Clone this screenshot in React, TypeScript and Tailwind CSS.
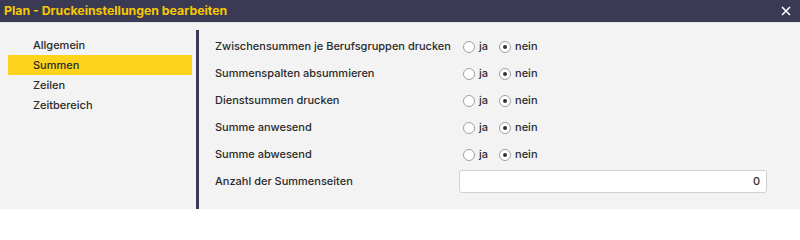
import React from "react";

const rows = [
  "Zwischensummen je Berufsgruppen drucken",
  "Summenspalten absummieren",
  "Dienstsummen drucken",
  "Summe anwesend",
  "Summe abwesend",
];

function Radio({ checked }: { checked?: boolean }) {
  return (
    <span className="w-[12px] h-[12px] rounded-full border border-[#a0a0a0] bg-white flex items-center justify-center">
      {checked && <span className="w-[4px] h-[4px] rounded-full bg-[#333]" />}
    </span>
  );
}

export default function App() {
  return (
    <div className="w-[800px] h-[209px] overflow-hidden bg-[#f3f3f3] flex flex-col text-[#2a2a2a] text-[11px] font-medium" style={{ fontFamily: 'Inter, sans-serif' }}>
      <div className="h-[22px] shrink-0 bg-[#3b3a55] flex items-center justify-between pl-[4px] pr-[4px] border-b border-[#e8e8ee] box-content">
        <span className="text-[#f6c800] font-bold text-[12.3px]">Plan - Druckeinstellungen bearbeiten</span>
        <svg width="12" height="12" viewBox="0 0 12 12" className="mr-[4px]">
          <path d="M2 2 L10 10 M10 2 L2 10" stroke="#fff" strokeWidth="1.6" />
        </svg>
      </div>
      <div className="flex flex-1 pt-[7px]">
        <div className="w-[196px] pl-[8px] pt-[5px] flex flex-col">
          {["Allgemein", "Summen", "Zeilen", "Zeitbereich"].map((t) => (
            <div key={t} className={`h-[20px] flex items-center pl-[25px] ${t === "Summen" ? "bg-[#fdd31c] w-[184px]" : ""}`}>
              {t}
            </div>
          ))}
        </div>
        <div className="w-[3px] bg-[#3b3a55]" />
        <div className="flex-1 pl-[16px] pt-[3px] flex flex-col">
          {rows.map((r) => (
            <div key={r} className="h-[27px] flex items-center whitespace-nowrap">
              <span className="w-[244px]">{r}</span>
              <span className="flex items-center ml-[4px]">
                <Radio />
                <span className="ml-[4px]">ja</span>
                <span className="ml-[11px] flex"><Radio checked /></span>
                <span className="ml-[4px]">nein</span>
              </span>
            </div>
          ))}
          <div className="h-[27px] flex items-center whitespace-nowrap">
            <span className="w-[244px]">Anzahl der Summenseiten</span>
            <div className="w-[308px] h-[23px] bg-white border border-[#d0d0d0] rounded-[3px] flex items-center justify-end pr-[6px]">0</div>
          </div>
        </div>
      </div>
    </div>
  );
}
